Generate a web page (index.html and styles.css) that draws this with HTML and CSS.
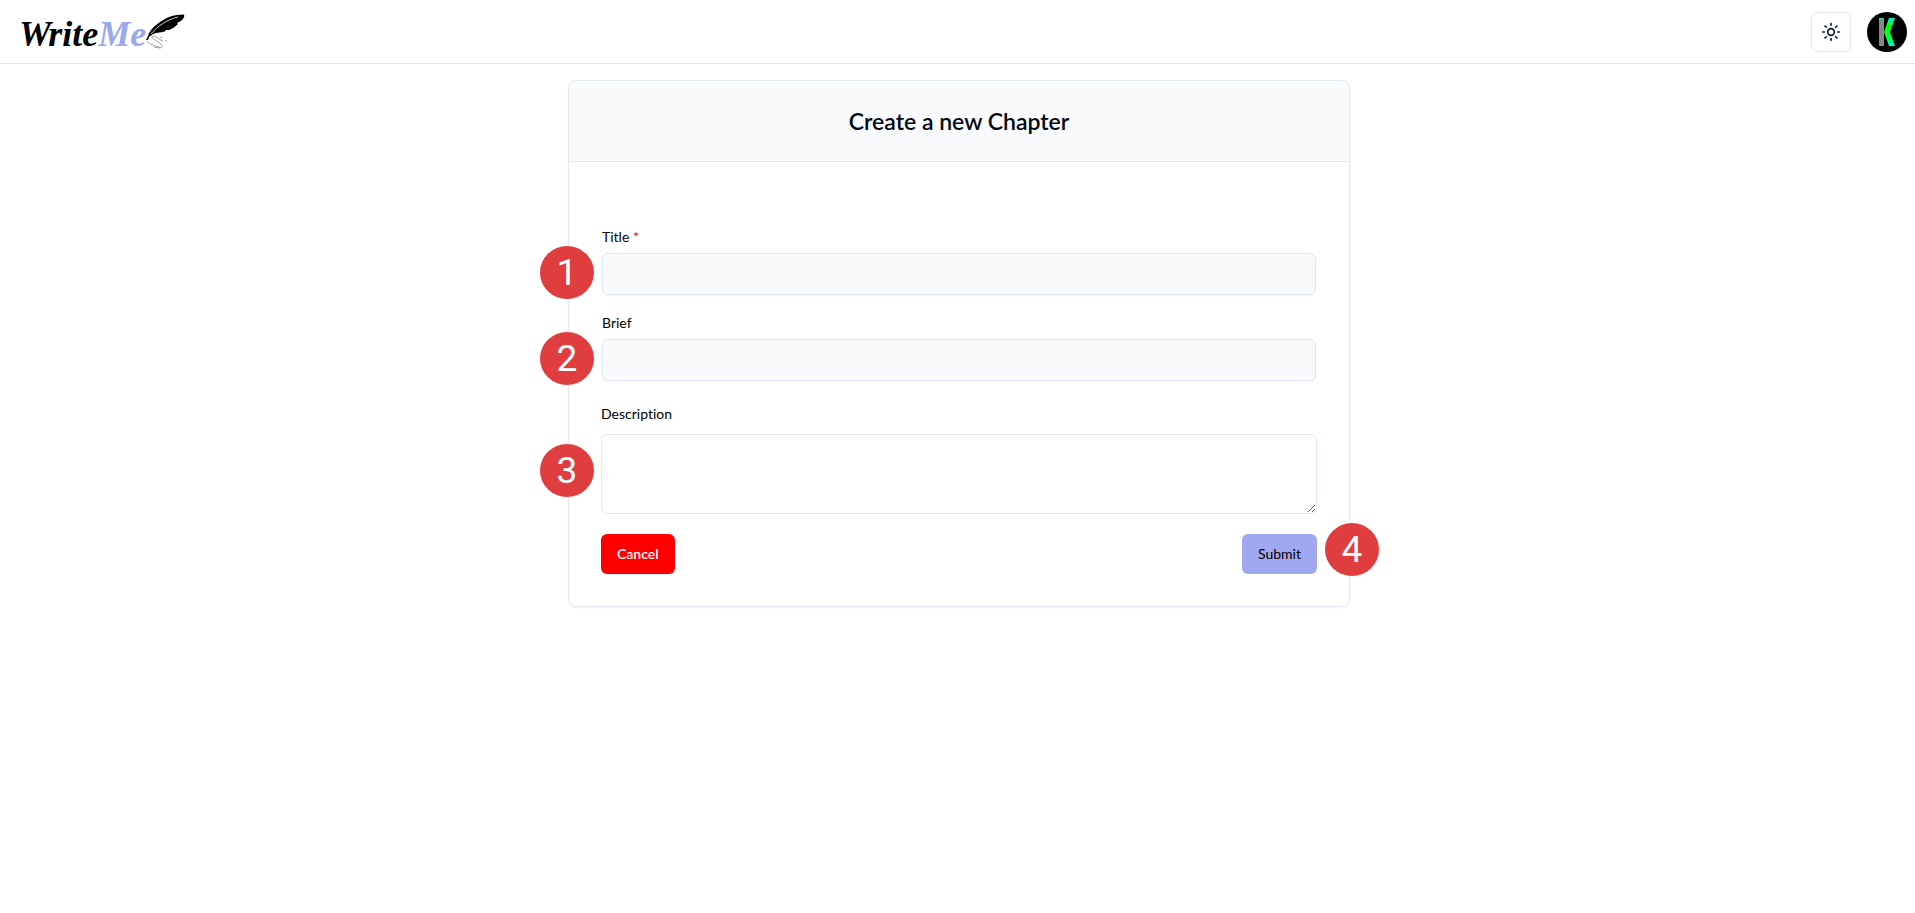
FILE: index.html
```html
<!DOCTYPE html>
<html lang="en">
<head>
<meta charset="utf-8">
<meta name="viewport" content="width=device-width, initial-scale=1">
<title>WriteMe - Create a new Chapter</title>
<link rel="stylesheet" href="styles.css">
</head>
<body>
<header class="topbar">
  <a class="logo" href="#">
    <span class="logo-text">Write<span class="logo-accent">Me</span></span>
    <svg class="logo-feather" viewBox="0 0 40 36" aria-hidden="true">
      <path d="M0 26L2 22C3 18 6 14 10 11C16 6 23 2 31 1L38 .5C39 3 37 5 35 7L31 9L32 10C29 13 26 15 23 16L19 16L20 17C16 19 11 18 7 20L3 23L2 26Z" fill="#000"/>
      <path d="M5 20C12 12 20 6 32 3" fill="none" stroke="#fff" stroke-width=".8"/>
      <path d="M1 27C2 31 12 32 15 34C18 32 14 29 9 26C6 24 5 22 8 22C11 23 14 26 17 27M14 24L16 23M19 26L21 28M8 33L14 34" fill="none" stroke="#777" stroke-width=".7"/>
    </svg>
  </a>
  <div class="actions">
    <button class="theme" type="button" aria-label="Toggle theme">
      <svg width="20" height="20" viewBox="0 0 24 24" fill="none" stroke="currentColor" stroke-width="2" stroke-linecap="round" aria-hidden="true"><circle cx="12" cy="12" r="4"/><path d="M12 2v2M12 20v2M4.930 4.930l1.410 1.410M17.660 17.660l1.410 1.410M2 12h2M20 12h2M6.340 17.660l-1.410 1.410M19.070 4.930l-1.410 1.410"/></svg>
    </button>
    <button class="avatar" type="button" aria-label="Account">
      <svg width="40" height="40" viewBox="0 0 40 40" aria-hidden="true">
        <defs><linearGradient id="k" x1="0" y1="0" x2="0" y2="1"><stop offset="0" stop-color="#00f5d0"/><stop offset=".3" stop-color="#0f0"/><stop offset=".7" stop-color="#00ff30"/><stop offset="1" stop-color="#00f5e0"/></linearGradient></defs>
        <rect width="40" height="40" fill="#000"/>
        <path d="M12 6h5v28h-5z" fill="#8c8587"/><path d="M12 6h5l-5 3z" fill="#00e8c0"/>
        <path d="M22 6h6l-5 14 5 14h-6l-5-14z" fill="url(#k)"/>
      </svg>
    </button>
  </div>
</header>
<main class="page">
  <section class="card">
    <h1 class="card-title">Create a new Chapter</h1>
    <form class="form">
      <div class="field">
        <label for="title">Title <span class="required">*</span></label>
        <input class="text-input" id="title" type="text" required>
        <span class="badge">1</span>
      </div>
      <div class="field">
        <label for="brief">Brief</label>
        <input class="text-input" id="brief" type="text">
        <span class="badge">2</span>
      </div>
      <div class="field field-area">
        <label for="description">Description</label>
        <textarea class="area" id="description"></textarea>
        <span class="badge badge-area">3</span>
      </div>
      <div class="buttons">
        <button class="btn cancel" type="button">Cancel</button>
        <button class="btn submit" type="submit">Submit</button>
        <span class="badge badge-end">4</span>
      </div>
    </form>
  </section>
</main>
</body>
</html>
```
FILE: styles.css
```css
* { box-sizing: border-box; }
body {
  margin: 0;
  background: #fff;
  color: #020817;
  font: 14px/20px Lato, "Open Sans", sans-serif;
  font-variant-ligatures: none;
}
.topbar {
  display: flex;
  align-items: center;
  justify-content: space-between;
  height: 64px;
  padding: 0 8px 0 19px;
  border-bottom: 1px solid #e2e8f0;
}
.logo {
  display: flex;
  align-items: center;
  color: #000;
  text-decoration: none;
}
.logo-text {
  padding-top: 4px;
  font: italic bold 36px/40px "Liberation Serif", serif;
}
.logo-accent { color: #9aa8f0; }
.logo-feather { width: 40px; height: 36px; }
.actions { display: flex; gap: 16px; }
.theme, .avatar {
  display: grid;
  place-items: center;
  width: 40px;
  height: 40px;
  padding: 0;
  color: #0f172a;
  background: #fff;
  border: 1px solid #e2e8f0;
  border-radius: 6px;
}
.avatar {
  overflow: hidden;
  border: 0;
  border-radius: 50%;
}
.page { padding: 16px 16px 16px 19px; }
.card {
  max-width: 782px;
  margin: 0 auto;
  border: 1px solid #e2e8f0;
  border-radius: 8px;
  box-shadow: 0 1px 2px rgba(0, 0, 0, .05);
}
.card-title {
  margin: 0;
  padding: 24px;
  font-size: 23px;
  font-weight: 600;
  line-height: 32px;
  text-align: center;
  background: #f8fafc;
  border-bottom: 1px solid #e2e8f0;
  border-radius: 8px 8px 0 0;
}
.form {
  display: flex;
  flex-direction: column;
  gap: 18px;
  padding: 65px 32px 32px;
}
.field {
  position: relative;
  display: flex;
  flex-direction: column;
  gap: 6px;
  padding: 0 1px;
  color: #000;
}
.field-area {
  gap: 10px;
  margin-top: 5px;
  padding: 0;
}
.required { color: #f00; }
.text-input, .area {
  width: 100%;
  padding: 8px 12px;
  font: inherit;
  border: 1px solid #e2e8f0;
  border-radius: 6px;
}
.text-input {
  height: 42px;
  background: #f8fafc;
  box-shadow: 0 1px 2px rgba(0, 0, 0, .05);
}
.area {
  display: block;
  height: 80px;
  background: #fff;
  resize: vertical;
}
.buttons {
  position: relative;
  display: flex;
  justify-content: space-between;
  margin-top: 2px;
}
.btn {
  height: 40px;
  padding: 0 16px;
  font: inherit;
  border: 0;
  border-radius: 6px;
}
.cancel {
  color: #fff;
  font-weight: 600;
  background: #f00;
}
.submit {
  color: #000;
  background: #a0a8f0;
}
.badge {
  position: absolute;
  top: 19px;
  left: -61px;
  width: 54px;
  height: 53px;
  color: #fff;
  font: 400 37px/54px Roboto, sans-serif;
  text-align: center;
  background: #e03e3e;
  border-radius: 50%;
}
.badge-area { top: 40px; }
.badge-end {
  top: -11px;
  right: -62px;
  left: auto;
}
```
